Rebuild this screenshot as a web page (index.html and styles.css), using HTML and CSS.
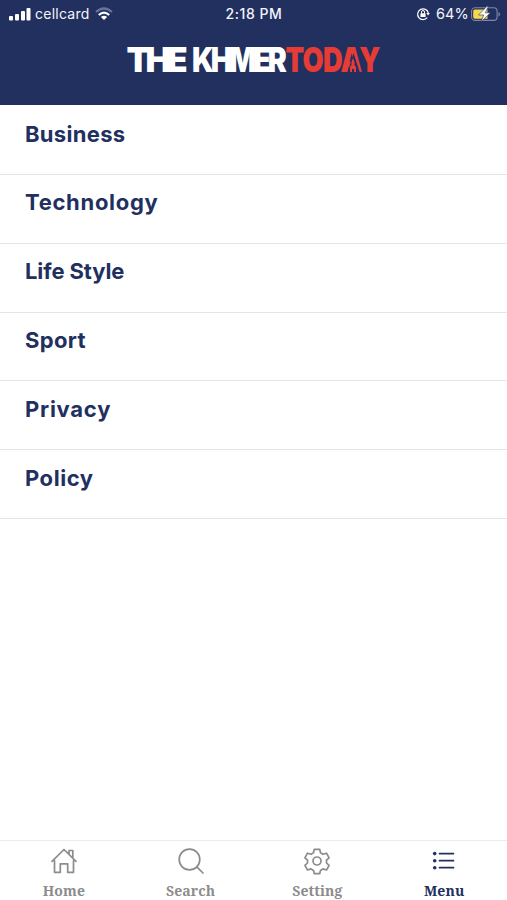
FILE: index.html
```
<!DOCTYPE html>
<html lang="en">
<head>
<meta charset="utf-8">
<title>The Khmer Today</title>
<link rel="stylesheet" href="styles.css">
</head>
<body>
<div class="app">
  <header class="header">
    <div class="status">
      <div class="carrier">
        <svg width="22" height="14" viewBox="0 0 22 14" fill="#fff"><rect x="0" y="9" width="4" height="4.500" rx="1"/><rect x="6" y="7" width="4" height="6.500" rx="1"/><rect x="12" y="4" width="4" height="9.500" rx="1"/><rect x="17.5" y="1" width="4" height="12.500" rx="1"/></svg>
        <span class="carrier-name">cellcard</span>
        <svg class="wifi" width="18" height="14" viewBox="0 0 18 14" fill="none" stroke-width="2.2"><path d="M1 5Q9-2 17 5" stroke="#68739b"/><path d="M3.8 8Q9 3.2 14.2 8" stroke="#fff"/><path d="M5.9 10Q9 7.4 12.1 10L9 13Z" fill="#fff"/></svg>
      </div>
      <span class="time">2:18 PM</span>
      <div class="power">
        <svg width="14" height="14" viewBox="0 0 14 14" fill="none" stroke="#fff"><path d="M11.2 10.7A5.4 5.4 0 1 1 12.3 6" stroke-width="1.2"/><path d="M10.3 6h3.6l-1.8 2.5Z" fill="#fff" stroke="none"/><path d="M5.5 6.5V5a1.5 1.5 0 0 1 3 0v1.5"/><rect x="4.4" y="6.3" width="5.2" height="3.7" rx=".6" fill="#fff" stroke="none"/></svg>
        <span class="percent">64%</span>
        <svg width="30" height="16" viewBox="0 0 30 16"><rect x=".6" y="1.800" width="25.500" height="12.600" rx="3.5" fill="none" stroke="#7e88a9" stroke-width="1.1"/><path d="M27.500 6v4.500c2-.8 2-3.700 0-4.500Z" fill="#7e88a9"/><path d="M4 3.500h12.500v9.200H4a1.800 1.800 0 0 1-1.800-1.800V5.300A1.800 1.800 0 0 1 4 3.500Z" fill="#f7d84b"/><path d="M16 .3 7.500 9h5.200l-2.600 6.700L19.500 6.800h-5.300L17.500.3Z" fill="#fff" stroke="#22305f" stroke-width=".6"/></svg>
      </div>
    </div>
    <svg class="logo" width="258" height="52" viewBox="0 0 258 52">
      <g class="logo-text">
        <text x="1.500" y="36" textLength="61" lengthAdjust="spacing">THE</text>
        <text transform="translate(67 36) scale(.84 1)" textLength="113" lengthAdjust="spacing">KHMER</text>
        <text class="red" transform="translate(160.500 36) scale(.8 1)" textLength="118.500" lengthAdjust="spacing">TODAY</text>
      </g>
      <path d="M222.500 37 228.500 17 235 37Z" fill="#22305f"/>
      <path d="M225 36v-5l1.500-2v-3l1.500-4 1.500 4v3l1.500 2v5h-2v-3h-2v3Z" fill="#e63c35"/>
    </svg>
  </header>
  <main class="list">
    <a class="row business">Business</a>
    <a class="row technology">Technology</a>
    <a class="row lifestyle">Life Style</a>
    <a class="row sport">Sport</a>
    <a class="row privacy">Privacy</a>
    <a class="row policy">Policy</a>
  </main>
  <nav class="tabs">
    <a class="tab"><svg width="28" height="28" viewBox="0 0 28 28"><path d="M4.500 13.500v11.800h5.800v-8.500h7.400v8.500h5.800V13.500M2 14.300 14 2.500l12 11.800M19 7V3.500h3.800v7.200"/></svg><span>Home</span></a>
    <a class="tab"><svg width="28" height="28" viewBox="0 0 28 28"><circle cx="12.500" cy="12.500" r="10.300"/><path d="m19.800 19.800 6.200 6.200"/></svg><span>Search</span></a>
    <a class="tab"><svg width="28" height="28" viewBox="0 0 28 28"><circle cx="14" cy="14" r="4"/><path d="M11.300 2.300h5.400l.8 3.500 2.500 1.500 3.500-1.100 2.600 4.600-2.600 2.400v2.800l2.600 2.400-2.600 4.600-3.500-1.100-2.500 1.500-.8 3.300h-5.400l-.8-3.300L8 21.900 4.500 23l-2.600-4.600L4.500 16v-2.800l-2.600-2.400 2.600-4.600L8 7.300l2.500-1.500Z"/></svg><span>Setting</span></a>
    <a class="tab active"><svg width="28" height="28" viewBox="0 0 28 28"><path d="M9.500 6.600h14M9.500 13.700h14M9.500 20.700h14"/><g class="dots"><circle cx="4.700" cy="6.600" r="1.800"/><circle cx="4.700" cy="13.700" r="1.800"/><circle cx="4.700" cy="20.700" r="1.800"/></g></svg><span>Menu</span></a>
  </nav>
</div>
</body>
</html>
```
FILE: styles.css
```
* { box-sizing: border-box; }
body { margin: 0; background: #fff; font-family: Inter, "Liberation Sans", sans-serif; }
.app { width: 507px; height: 900px; display: flex; flex-direction: column; overflow: hidden; }
.header { height: 105px; flex: none; background: #22305f; display: flex; flex-direction: column; align-items: center; }
.status { width: 100%; height: 28px; padding: 0 6px 0 9px; display: grid; grid-template-columns: 1fr auto 1fr; align-items: center; color: #f4f6fb; font-size: 14px; line-height: 28px; }
.carrier, .power { display: flex; align-items: center; }
.carrier-name { margin-left: 4px; letter-spacing: .25px; }
.wifi { margin-left: 5px; }
.time { font-weight: 500; font-size: 14px; letter-spacing: .55px; margin-right: 2px; }
.power { justify-content: flex-end; }
.percent { margin: 0 2px 0 6px; font-size: 14.5px; letter-spacing: .15px; }
.logo { margin: 8px 0 0 1px; }
.logo-text { font-weight: 900; font-size: 34px; fill: #fff; }
.logo-text .red { fill: #e63c35; }
.list { flex: 1; }
.row { display: block; height: 68.8px; padding: 12.4px 25px 0; border-bottom: 1px solid #e5e5e5; color: #22305f; font-size: 22px; line-height: 30px; font-weight: 700; }
.row:first-child { height: 70px; padding-top: 14px; }
.business { letter-spacing: .3px; }
.technology { letter-spacing: .7px; }
.lifestyle { letter-spacing: -.1px; }
.sport { letter-spacing: .35px; }
.privacy { letter-spacing: .75px; }
.policy { letter-spacing: .55px; }
.tabs { height: 60px; flex: none; border-top: 1px solid #ececec; display: grid; grid-template-columns: repeat(4, 1fr); }
.tab { display: flex; flex-direction: column; align-items: center; padding: 6px 0 0 1px; color: #8c8c8c; font-family: "Noto Serif", "DejaVu Serif", serif; font-weight: 700; font-size: 14px; line-height: 20px; letter-spacing: .1px; }
.tab svg { fill: none; stroke: currentColor; stroke-width: 1.7; stroke-linejoin: round; stroke-linecap: round; }
.tab span { margin-top: 5.500px; }
.active { color: #22305f; }
.tab .dots { fill: currentColor; stroke: none; }
```
